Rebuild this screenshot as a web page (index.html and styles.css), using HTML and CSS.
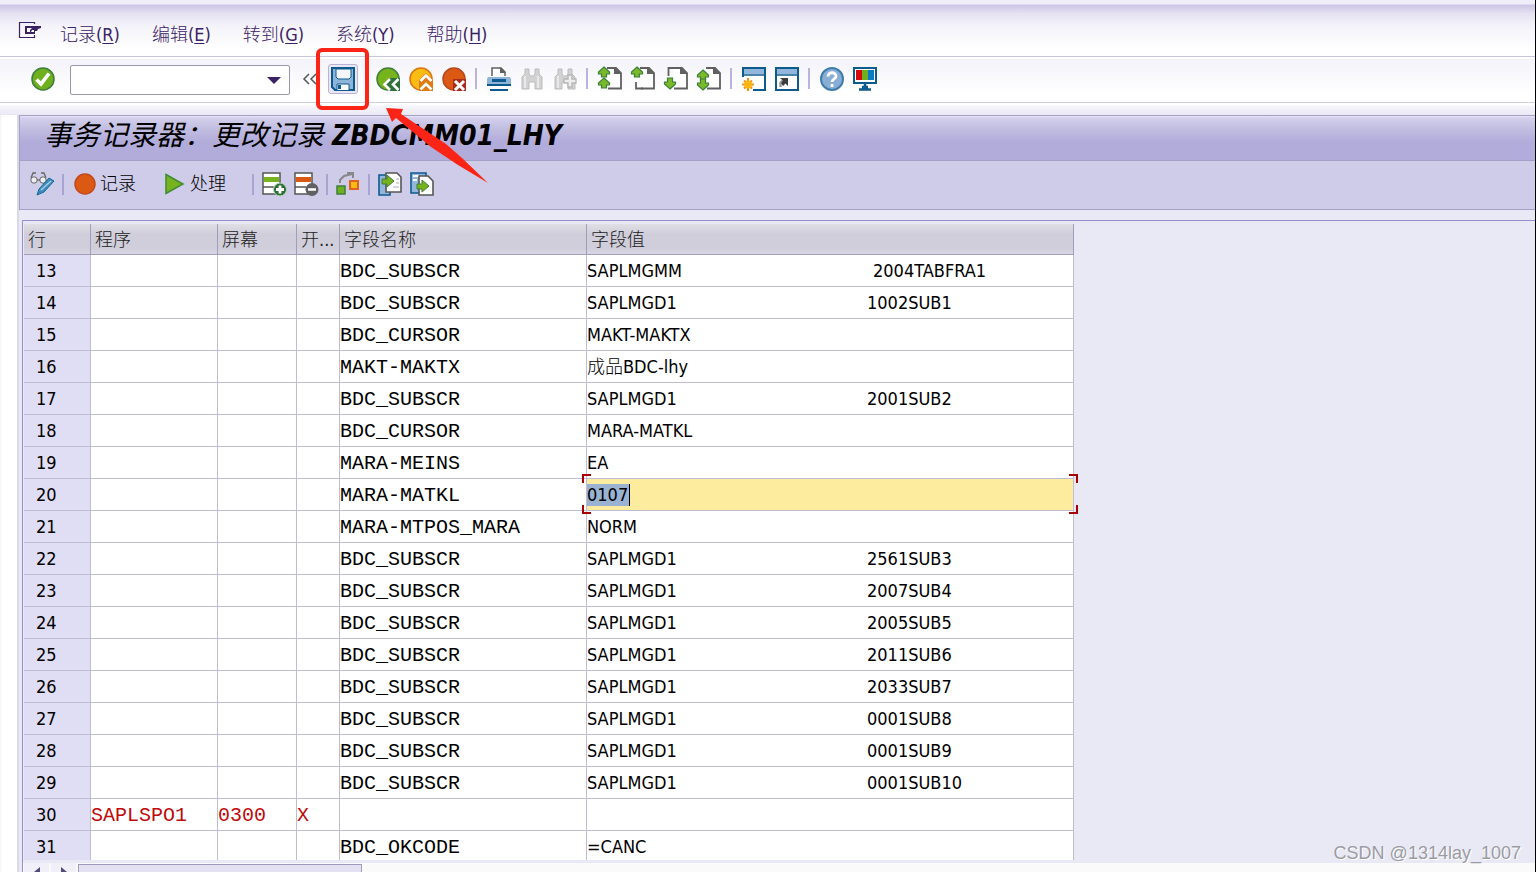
FILE: index.html
```html
<!DOCTYPE html>
<html lang="zh-CN">
<head>
<meta charset="utf-8">
<title>事务记录器</title>
<link rel="stylesheet" href="styles.css">
</head>
<body>
<svg class="defs" aria-hidden="true">
  <defs>
    <path id="up" d="M6 0L11.500 5V7H8.500V10H3.500V7H0.500V5Z"/>
    <path id="down" d="M6 11L11.500 6V4H8.500V0H3.500V4H0.500V6Z"/>
    <g id="sheet"><path d="M9 1H18L23 6V21.500H10" fill="#fff" stroke="#606060" stroke-width="1.800"/><path d="M16 0V7H24Z" fill="#606060"/></g>
    <g id="glasspair"><path d="M2 22V10L5 7V2H9V7L10.500 9H13.500L15 7V2H19V7L22 10V22H15V15H9V22Z" fill="#d2d2d2" stroke="#bcbcbc"/><path d="M5 9V21M18 9V21" stroke="#e9e9e9" stroke-width="2"/></g>
    <g id="win"><rect x="1" y="1" width="22" height="22" fill="#fff" stroke="#0d5a8e" stroke-width="2"/><path d="M2 2H22V7H2Z" fill="#93b7dc"/><path d="M1 8H23" stroke="#0d5a8e" stroke-width="1.500"/></g>
  </defs>
</svg>

<nav class="menubar">
  <button class="sysmenu" aria-label="菜单"><svg width="24" height="18" viewBox="0 0 24 18"><path d="M16.500 3V1.500H1.500V16.500H16.500V14" fill="none" stroke="#3a2265" stroke-width="1.200"/><path d="M7 5H23V7L20 8L19 10H17V13H7Z" fill="#3a2265"/><path d="M9 7H14L12 9V11H9ZM14 9H16V11H13Z" fill="#fff"/></svg></button>
  <button>记录(<u>R</u>)</button>
  <button>编辑(<u>E</u>)</button>
  <button>转到(<u>G</u>)</button>
  <button>系统(<u>Y</u>)</button>
  <button>帮助(<u>H</u>)</button>
</nav>

<div class="toolbar">
  <button class="enter" aria-label="回车"><svg width="24" height="24"><circle cx="12" cy="12" r="11" fill="#6fb01f" stroke="#3f7d3d" stroke-width="1.500"/><path d="M5.500 12.500L10 17L18 6.500" fill="none" stroke="#fff" stroke-width="3.600"/></svg></button>
  <div class="command">
    <input type="text" aria-label="命令字段">
    <svg class="caret" width="14" height="8" aria-hidden="true"><path d="M0 1H14L7 8Z" fill="#3a2265"/></svg>
  </div>
  <button class="collapse" aria-label="收起"><svg width="14" height="12" fill="none" stroke="#555" stroke-width="1.500"><path d="M6 1L1 6L6 11M13 1L8 6L13 11"/></svg></button>
  <div class="savebox">
    <button class="save" aria-label="保存"><svg width="24" height="24"><path d="M1 1H23V23H4L1 20Z" fill="#8db4da" stroke="#0d5a8e" stroke-width="2"/><path d="M5 2V10L7 12H18L20 10V2Z" fill="#f4f6fc" stroke="#0d5a8e"/><path d="M6 23V17H18V23" fill="#fff" stroke="#0d5a8e"/><path d="M7 18H10V22H7Z" fill="#0d5a8e"/></svg></button>
    <span class="mark"></span>
    <svg class="arrow" width="104" height="76" viewBox="0 0 104 76" aria-hidden="true"><path d="M0 0L17 1L15 6L60 36L76 50L102 75L72 57L45 39L10 10L6 14Z" fill="#fb2417"/></svg>
  </div>
  <button aria-label="返回"><svg width="24" height="24"><circle cx="12" cy="12" r="11" fill="#76b31c" stroke="#3f7d3d" stroke-width="1.500"/><path d="M14.500 11L8 17.500L14.500 24H24V11Z" fill="#2f7138"/><path d="M14 12L8.500 17.500L14 23M22.500 12L17 17.500L22.500 23" fill="none" stroke="#fff" stroke-width="2.600"/></svg></button>
  <button aria-label="退出"><svg width="24" height="24"><circle cx="12" cy="12" r="11" fill="#fdbb14" stroke="#dd7412" stroke-width="1.500"/><path d="M10 13L17 6L24 13V24H10Z" fill="#e07a15"/><path d="M11.500 14L17 8.500L22.500 14M11.500 22.500L17 17L22.500 22.500" fill="none" stroke="#fff" stroke-width="2.600"/></svg></button>
  <button aria-label="取消"><svg width="24" height="24"><circle cx="12" cy="12" r="11" fill="#dc5914" stroke="#b6471a" stroke-width="1.500"/><path d="M11 12H24V24H11Z" fill="#a92d1c"/><path d="M13 14L22 23M22 14L13 23" stroke="#fff" stroke-width="3"/></svg></button>
  <span class="sep"></span>
  <button aria-label="打印"><svg width="24" height="24"><path d="M5 9V1H14L18 5V9" fill="#fff" stroke="#606060" stroke-width="1.500"/><path d="M13 0V6H19Z" fill="#606060"/><path d="M1 10H23L24 12V18H0V12Z" fill="#8fb4da"/><path d="M0 17H24V19H0ZM5 12H19V15H5ZM3 22H21V24H3Z" fill="#0d5a8e"/></svg></button>
  <button aria-label="查找"><svg width="24" height="24"><use href="#glasspair"/></svg></button>
  <button aria-label="查找下一个"><svg width="24" height="24"><use href="#glasspair"/><path d="M15 8H19V12H23V16H19V20H15V16H11V12H15Z" fill="#eee" stroke="#b5b5b5" stroke-width="1.300"/></svg></button>
  <span class="sep"></span>
  <button aria-label="第一页"><svg width="24" height="24"><use href="#sheet"/><g class="green"><use href="#up"/><use href="#up" y="11"/></g></svg></button>
  <button aria-label="上一页"><svg width="24" height="24"><use href="#sheet"/><path d="M5 15V21.500H12" fill="none" stroke="#606060" stroke-width="1.800"/><g class="green"><use href="#up"/></g></svg></button>
  <button aria-label="下一页"><svg width="24" height="24"><use href="#sheet"/><path d="M12 1H4.500V9" fill="none" stroke="#606060" stroke-width="1.800"/><g class="green"><use href="#down" y="11"/></g></svg></button>
  <button aria-label="最后一页"><svg width="24" height="24"><use href="#sheet"/><g class="green"><use href="#up" y="3"/><use href="#down" y="12"/></g></svg></button>
  <span class="sep"></span>
  <button aria-label="新建会话"><svg width="24" height="24"><use href="#win"/><path d="M0 10H11V24H0Z" fill="#fff"/><path d="M6 11V24M0 17.500H12M2 13.500L10 21.500M10 13.500L2 21.500" stroke="#f0920f" stroke-width="2"/><circle cx="6" cy="17.500" r="4" fill="#fcb515"/></svg></button>
  <button aria-label="快捷方式"><svg width="24" height="24"><use href="#win"/><path d="M5.500 20V16L8 13" fill="none" stroke="#999" stroke-width="2.500"/><path d="M5 11H13V19L10.500 16.500L8 19L6 16L8 13.500Z" fill="#3c3c3c"/></svg></button>
  <span class="sep"></span>
  <button aria-label="帮助"><svg width="24" height="24"><circle cx="12" cy="12" r="11" fill="#89aed6" stroke="#3f7cab" stroke-width="2"/><path d="M8 9.500C8 4.500 16.500 4.500 16 9.500C16 12 12 12 12 15M12 17V20" fill="none" stroke="#fff" stroke-width="2.800"/></svg></button>
  <button aria-label="自定义布局"><svg width="24" height="24"><rect x="1" y="1" width="22" height="15" fill="#fff" stroke="#0d5a8e" stroke-width="2"/><path d="M3 3H9V13H3Z" fill="#d40a0a"/><path d="M9 3H15V13H9Z" fill="#6fb01f"/><path d="M15 3H21V13H15Z" fill="#0a7cc4"/><path d="M12 17V22M6 22.500H18M9 20H15" stroke="#0d5a8e" stroke-width="2.500"/></svg></button>
</div>

<main class="workspace">
  <header class="titlebar"><h1>事务记录器：更改记录 <b>ZBDCMM01_LHY</b></h1></header>
  <div class="appbar">
    <button aria-label="显示/更改"><svg width="24" height="24"><path d="M1 6L3 1H6M11 1H14L16 6" fill="none" stroke="#666" stroke-width="1.300"/><circle cx="4" cy="8" r="3.200" fill="#eee" stroke="#666"/><circle cx="13" cy="8" r="3.200" fill="#eee" stroke="#666"/><path d="M7 8H10" stroke="#555"/><path d="M7 23L9 17L19 6L24 9L14 20Z" fill="#3c8dbd" stroke="#19679b"/><path d="M11 18L21 9" stroke="#a9cbe3" stroke-width="1.500"/></svg></button>
    <span class="sep"></span>
    <button class="labelled"><svg width="24" height="24"><circle cx="13" cy="12" r="10" fill="#dc5914" stroke="#c2481b" stroke-width="1.500"/></svg>记录</button>
    <button class="labelled process"><svg width="24" height="24"><path d="M4 2.500L21 12L4 21.500Z" fill="#76b31c" stroke="#3f8a35" stroke-width="1.500"/></svg>处理</button>
    <span class="sep"></span>
    <button aria-label="插入行"><svg width="24" height="24"><path d="M1 1H18V22H1Z" fill="#fff" stroke="#555" stroke-width="1.500"/><path d="M2 5H17V10H2Z" fill="#76b31c"/><path d="M1 15H12" stroke="#555" stroke-width="1.500"/><circle cx="18" cy="17.500" r="6.500" fill="#2f7138" stroke="#b9d8c0"/><path d="M18 13.500V21.500M14 17.500H22" stroke="#fff" stroke-width="2.800"/></svg></button>
    <button aria-label="删除行"><svg width="24" height="24"><path d="M1 1H18V22H1Z" fill="#fff" stroke="#555" stroke-width="1.500"/><path d="M2 5H17V10H2Z" fill="#dc5914"/><path d="M1 15H12" stroke="#555" stroke-width="1.500"/><circle cx="18" cy="17.500" r="6.500" fill="#606060"/><path d="M14 17.500H22" stroke="#fff" stroke-width="2.500"/></svg></button>
    <span class="sep"></span>
    <button aria-label="移动"><svg width="24" height="24"><path d="M4 11V8L8 4L16 2M11 1H17V6" fill="none" stroke="#888" stroke-width="2"/><rect x="1" y="14" width="8" height="8" fill="#6fb01f" stroke="#3f7d3d" stroke-width="1.500"/><rect x="14" y="9" width="8" height="8" fill="#fdbb14" stroke="#e0641f" stroke-width="2"/></svg></button>
    <span class="sep"></span>
    <button aria-label="导入"><svg width="24" height="24"><path d="M1 3H12V23H1Z" fill="#93b7dc" stroke="#0d5a8e" stroke-width="1.600"/><path d="M8 1H19L23 5V20H8Z" fill="#fff" stroke="#555" stroke-width="1.600"/><path d="M18 7H21M18 11H21M15 15H21" stroke="#aaa"/><path d="M4 7H9V3L16 9L9 15V12H4Z" fill="#76b31c" stroke="#3f7d3d"/></svg></button>
    <button aria-label="导出"><svg width="24" height="24"><path d="M1 1H16V21H1Z" fill="#93b7dc" stroke="#0d5a8e" stroke-width="1.600"/><path d="M3 4H9M3 8H7" stroke="#fff" stroke-width="2"/><path d="M9 4H18L23 9V23H9Z" fill="#fff" stroke="#555" stroke-width="1.600"/><path d="M7 12H12V8L19 14L12 20V17H7Z" fill="#76b31c" stroke="#3f7d3d"/></svg></button>
  </div>

  <section class="pane">
    <div class="grid">
      <table>
        <colgroup><col class="c-line"><col class="c-program"><col class="c-screen"><col class="c-start"><col class="c-name"><col class="c-value"></colgroup>
        <thead><tr><th>行</th><th>程序</th><th>屏幕</th><th>开...</th><th>字段名称</th><th>字段值</th></tr></thead>
        <tbody>
          <tr><th>13</th><td></td><td></td><td></td><td>BDC_SUBSCR</td><td><span class="part wide">SAPLMGMM</span>2004TABFRA1</td></tr>
          <tr><th>14</th><td></td><td></td><td></td><td>BDC_SUBSCR</td><td><span class="part">SAPLMGD1</span>1002SUB1</td></tr>
          <tr><th>15</th><td></td><td></td><td></td><td>BDC_CURSOR</td><td>MAKT-MAKTX</td></tr>
          <tr><th>16</th><td></td><td></td><td></td><td>MAKT-MAKTX</td><td>成品BDC-lhy</td></tr>
          <tr><th>17</th><td></td><td></td><td></td><td>BDC_SUBSCR</td><td><span class="part">SAPLMGD1</span>2001SUB2</td></tr>
          <tr><th>18</th><td></td><td></td><td></td><td>BDC_CURSOR</td><td>MARA-MATKL</td></tr>
          <tr><th>19</th><td></td><td></td><td></td><td>MARA-MEINS</td><td>EA</td></tr>
          <tr><th>20</th><td></td><td></td><td></td><td>MARA-MATKL</td><td class="active"><input type="text" value="0107" aria-label="字段值"><i class="corner tl"></i><i class="corner tr"></i><i class="corner bl"></i><i class="corner br"></i></td></tr>
          <tr><th>21</th><td></td><td></td><td></td><td>MARA-MTPOS_MARA</td><td>NORM</td></tr>
          <tr><th>22</th><td></td><td></td><td></td><td>BDC_SUBSCR</td><td><span class="part">SAPLMGD1</span>2561SUB3</td></tr>
          <tr><th>23</th><td></td><td></td><td></td><td>BDC_SUBSCR</td><td><span class="part">SAPLMGD1</span>2007SUB4</td></tr>
          <tr><th>24</th><td></td><td></td><td></td><td>BDC_SUBSCR</td><td><span class="part">SAPLMGD1</span>2005SUB5</td></tr>
          <tr><th>25</th><td></td><td></td><td></td><td>BDC_SUBSCR</td><td><span class="part">SAPLMGD1</span>2011SUB6</td></tr>
          <tr><th>26</th><td></td><td></td><td></td><td>BDC_SUBSCR</td><td><span class="part">SAPLMGD1</span>2033SUB7</td></tr>
          <tr><th>27</th><td></td><td></td><td></td><td>BDC_SUBSCR</td><td><span class="part">SAPLMGD1</span>0001SUB8</td></tr>
          <tr><th>28</th><td></td><td></td><td></td><td>BDC_SUBSCR</td><td><span class="part">SAPLMGD1</span>0001SUB9</td></tr>
          <tr><th>29</th><td></td><td></td><td></td><td>BDC_SUBSCR</td><td><span class="part">SAPLMGD1</span>0001SUB10</td></tr>
          <tr class="screenrow"><th>30</th><td>SAPLSPO1</td><td>0300</td><td>X</td><td></td><td></td></tr>
          <tr><th>31</th><td></td><td></td><td></td><td>BDC_OKCODE</td><td>=CANC</td></tr>
        </tbody>
      </table>
    </div>
    <div class="scrollbar">
      <button aria-label="向左"><svg width="8" height="12"><path d="M7 1V11L1 6Z" fill="#554a75"/></svg></button>
      <button aria-label="向右"><svg width="8" height="12"><path d="M1 1V11L7 6Z" fill="#554a75"/></svg></button>
      <span class="thumb"></span>
    </div>
  </section>
</main>
<div class="watermark">CSDN @1314lay_1007</div>
</body>
</html>
```
FILE: styles.css
```css
* { box-sizing: border-box; }

body {
  margin: 0;
  height: 100vh;
  display: flex;
  flex-direction: column;
  overflow: hidden;
  position: relative;
  border-right: 1px solid #000;
  background: #fff;
  color: #000;
  font: 18px/24px "DejaVu Sans Condensed", "Noto Sans CJK SC Light", "Noto Sans CJK SC", sans-serif;
}

.defs { position: absolute; width: 0; height: 0; }

button {
  display: flex;
  align-items: center;
  padding: 0;
  border: 0;
  background: none;
  color: inherit;
  font: inherit;
}

svg { display: block; flex: none; overflow: visible; }

.green { fill: #7ab929; stroke: #3c7f3a; stroke-width: 1.2; }

.menubar {
  flex: none;
  display: flex;
  align-items: center;
  gap: 32px;
  height: 57px;
  padding: 14px 18px 0;
  border-bottom: 1px solid #c9c5dc;
  background: linear-gradient(#f0eef8 0, #f0eef8 4px, #cdc6e6 5px, #e6e3f2 14px, #f4f3fa 26px, #fff 50px);
  color: #3a2265;
}
.menubar u { text-underline-offset: 2px; }
.menubar .sysmenu { margin: 0 -14px 10px 0; }

.toolbar {
  flex: none;
  display: flex;
  align-items: center;
  gap: 9px;
  height: 46px;
  padding: 0 31px 4px;
  border-top: 2px solid #fff;
  border-bottom: 1px solid #cfcce0;
  background: linear-gradient(#f4f3fa, #fff 80%);
}
.sep { width: 3px; height: 21px; border-left: 2px solid #bbb3dd; }

.command {
  position: relative;
  width: 220px;
  margin: 2px 4px 0 6px;
}
.command input {
  display: block;
  width: 100%;
  height: 30px;
  border: 1px solid #9b98ad;
  border-radius: 2px;
  background: #fff;
  font: inherit;
}
.caret { position: absolute; right: 9px; top: 11px; }

.savebox { position: relative; margin: 0 9px 0 2px; }
.save {
  width: 30px;
  height: 30px;
  justify-content: center;
  border: 1px solid #b9b3d6;
  border-radius: 3px;
  background: #e9e7f5;
}
.mark {
  position: absolute;
  left: -12px;
  top: -16px;
  width: 53px;
  height: 62px;
  border: 4px solid #fb2417;
  border-radius: 6px;
  z-index: 2;
}
.arrow { position: absolute; left: 58px; top: 44px; z-index: 2; }

.workspace {
  flex: 1;
  min-height: 0;
  display: flex;
  flex-direction: column;
  padding: 12px 0 0 19px;
  background:
    linear-gradient(#fff 0, #fff 2px, #f6f5fb 3px, #eae8f4 12px, transparent 12px) 0 0 / 100% 12px no-repeat,
    linear-gradient(90deg, #f2f2f4 0, #fff 2px, #fff 17px, #dbd8ea 17px, #dbd8ea 19px, #e9e9f5 19px);
}

.titlebar {
  flex: none;
  height: 46px;
  border: solid #a5a0c6;
  border-width: 1px 0 1px 1px;
  background: linear-gradient(#e9e7f6 0, #d3cfec 2px, #c0bce0 14px, #b2acdb 26px, #b2acdb 100%);
}
.titlebar h1 {
  margin: 0;
  padding-left: 24px;
  font-family: "DejaVu Sans Condensed", "Noto Sans CJK SC", sans-serif;
  font-size: 28px;
  line-height: 40px;
  font-weight: 400;
  font-style: italic;
  white-space: nowrap;
}

.appbar {
  flex: none;
  display: flex;
  align-items: center;
  gap: 8px;
  height: 49px;
  padding: 0 10px 2px;
  border: solid #a5a0c6;
  border-width: 0 0 1px 1px;
  background: #cecce8;
}
.appbar .sep { width: 2px; border-color: #aaa4d4; }
.labelled { gap: 4px; }
.process { margin: 0 18px; }

.pane {
  flex: 1;
  min-height: 0;
  display: flex;
  flex-direction: column;
  margin: 10px 0 0 3px;
  border: solid #9890cc;
  border-width: 1px 0 0 1px;
  background: #e9e9f5;
}
.grid { flex: 1; min-height: 0; overflow: hidden; padding: 3px 0 0 1px; }

table {
  width: 1050px;
  table-layout: fixed;
  border-collapse: separate;
  border-spacing: 0;
}
.c-line { width: 67px; }
.c-program { width: 127px; }
.c-screen { width: 79px; }
.c-start { width: 43px; }
.c-name { width: 247px; }
.c-value { width: 487px; }

th, td {
  height: 32px;
  padding: 0;
  border: solid #c0bcd6;
  border-width: 0 1px 1px 0;
  text-align: left;
  font-weight: 400;
  white-space: nowrap;
}
td { padding-top: 2px; background: #fff; font-family: "Liberation Mono", monospace; font-size: 20px; }
td:last-child { padding-top: 0; font-family: inherit; font-size: 18px; }
thead th {
  height: 31px;
  padding: 2px 0 0 4px;
  border-color: #a29db9;
  background: linear-gradient(#e0dfe6, #d0ceda 10px, #d0ceda 24px, #d8d6e2);
  color: #222;
}
tbody th { padding-left: 12px; background: #e0def4; }
.screenrow td { color: #c00a0a; }

.part { display: inline-block; width: 280px; }
.wide { width: 286px; }

td.active { position: relative; background: #feec9e; }
.active input {
  display: block;
  width: 43px;
  height: 22px;
  padding: 0;
  border: 0;
  border-right: 1px solid #000;
  background: #9ab3d3;
  font: inherit;
}
.corner { position: absolute; width: 9px; height: 9px; border: 0 solid #a80000; z-index: 1; }
.tl { left: -5px; top: -5px; border-width: 2px 0 0 2px; }
.tr { right: -5px; top: -5px; border-width: 2px 2px 0 0; }
.bl { left: -5px; bottom: -4px; border-width: 0 0 2px 2px; }
.br { right: -5px; bottom: -4px; border-width: 0 2px 2px 0; }

.scrollbar {
  flex: none;
  display: flex;
  gap: 2px;
  height: 12px;
  overflow: hidden;
  padding-left: 1px;
  border-top: 3px solid #e9e9f5;
  background: #fafafa;
}
.scrollbar button { width: 25px; height: 18px; justify-content: center; background: #f1f0f8; }
.thumb {
  width: 284px;
  height: 20px;
  margin-top: 1px;
  border: 1px solid #a09bbd;
  background: #e3e1f2;
}

.watermark {
  position: absolute;
  right: 14px;
  bottom: 7px;
  color: #9b9ba3;
  font: 18px/24px "Liberation Sans", sans-serif;
  text-shadow: 1px 1px 0 #fff;
}
```
